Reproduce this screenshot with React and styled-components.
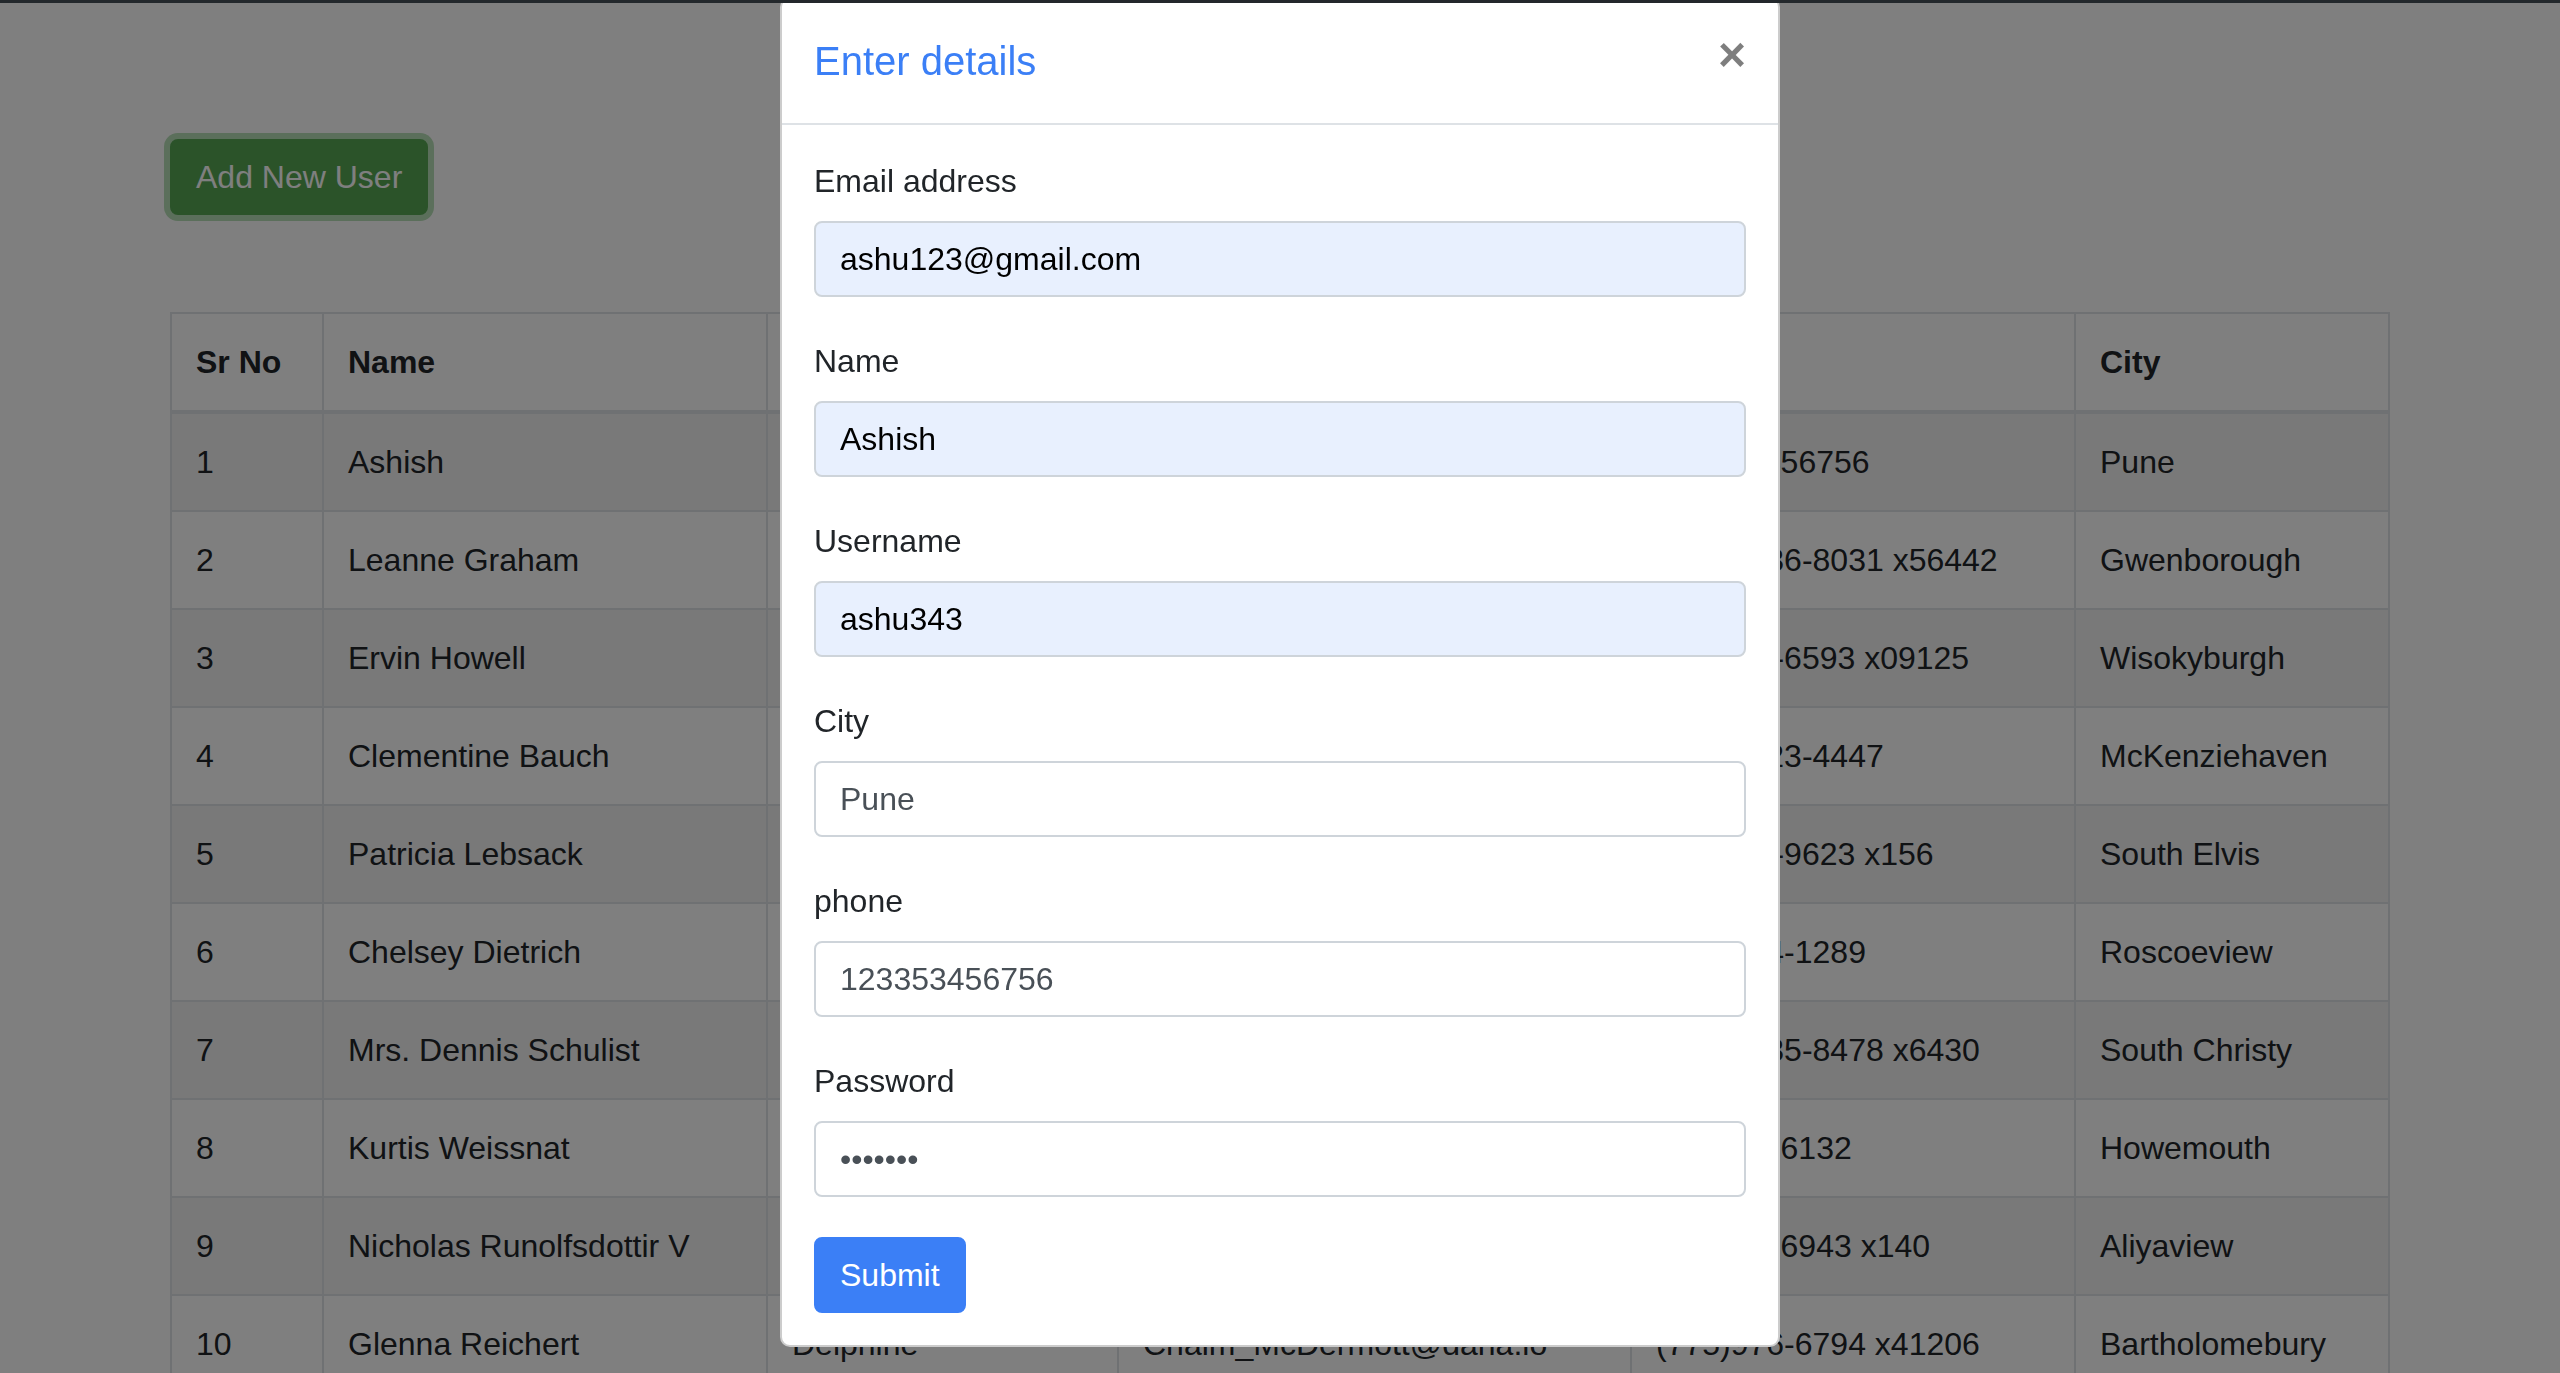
import React from "react";
import styled, { createGlobalStyle } from "styled-components";

const GlobalStyle = createGlobalStyle`
  html, body {
    margin: 0;
    padding: 0;
    overflow: hidden;
    background: #fff;
  }
  body {
    font-family: "Liberation Sans", Arial, Helvetica, sans-serif;
    font-size: 32px;
    line-height: 1.5;
    color: #212529;
  }
  *, *::before, *::after { box-sizing: border-box; }
`;

const TopStrip = styled.div`
  position: fixed;
  top: 0;
  left: 0;
  right: 0;
  height: 3px;
  background: #23282c;
  z-index: 100;
`;

const Container = styled.div`
  max-width: 2280px;
  margin: 0 auto;
  padding: 139px 30px 0;
`;

const AddButton = styled.button`
  font-family: inherit;
  font-size: 32px;
  line-height: 48px;
  padding: 12px 24px;
  border: 2px solid #56a653;
  border-radius: 8px;
  background: #56a653;
  color: #fff;
  box-shadow: 0 0 0 6px rgba(109, 189, 109, 0.5);
  cursor: pointer;
`;

const Table = styled.table`
  margin-top: 97px;
  width: 100%;
  table-layout: fixed;
  border-collapse: collapse;
  border: 2px solid #dee2e6;
  color: #212529;
`;

const Th = styled.th`
  text-align: left;
  font-weight: 700;
  padding: 24px;
  line-height: 48px;
  vertical-align: bottom;
  border: 2px solid #dee2e6;
  border-bottom-width: 4px;
`;

const Tr = styled.tr`
  background: ${(p) => (p.$odd ? "rgba(0,0,0,0.05)" : "transparent")};
`;

const Td = styled.td`
  padding: 24px;
  line-height: 48px;
  vertical-align: top;
  border: 2px solid #dee2e6;
  white-space: nowrap;
  overflow: hidden;
`;

const Backdrop = styled.div`
  position: fixed;
  inset: 0;
  background: rgba(0, 0, 0, 0.5);
  z-index: 10;
`;

const ModalLayer = styled.div`
  position: fixed;
  inset: 0;
  z-index: 20;
  display: flex;
  justify-content: center;
  align-items: flex-start;
`;

const Modal = styled.div`
  width: 1000px;
  margin-top: -3px;
  background: #fff;
  border: 2px solid rgba(0, 0, 0, 0.2);
  border-radius: 10px;
  display: flex;
  flex-direction: column;
`;

const ModalHeader = styled.div`
  display: flex;
  align-items: flex-start;
  justify-content: space-between;
  padding: 32px;
  border-bottom: 2px solid #dee2e6;
`;

const ModalTitle = styled.h5`
  margin: 0;
  font-size: 40px;
  font-weight: 400;
  line-height: 60px;
  color: #3b7ff6;
`;

const CloseButton = styled.button`
  padding: 32px;
  margin: -32px -32px -32px auto;
  background: transparent;
  border: 0;
  font-family: inherit;
  font-size: 48px;
  font-weight: 700;
  line-height: 1;
  color: #000;
  opacity: 0.5;
  text-shadow: 0 2px 0 #fff;
  cursor: pointer;
`;

const ModalBody = styled.form`
  padding: 32px;
`;

const FormGroup = styled.div`
  margin-bottom: 40px;
`;

const Label = styled.label`
  display: inline-block;
  margin-bottom: 16px;
  font-size: 32px;
  line-height: 48px;
  color: #212529;
`;

const Input = styled.input`
  display: block;
  width: 100%;
  height: 76px;
  padding: 12px 24px;
  font-family: inherit;
  font-size: 32px;
  line-height: 48px;
  color: ${(p) => (p.$filled ? "#000" : "#495057")};
  background: ${(p) => (p.$filled ? "#e8f0fe" : "#fff")};
  border: 2px solid #ced4da;
  border-radius: 8px;
  outline: none;
`;

const SubmitButton = styled.button`
  font-family: inherit;
  font-size: 32px;
  line-height: 48px;
  padding: 12px 24px;
  border: 2px solid #3b7ff6;
  border-radius: 8px;
  background: #3b7ff6;
  color: #fff;
  cursor: pointer;
`;

const widths = [152, 444, 351, 513, 444, 314];
const headers = ["Sr No", "Name", "Username", "Email", "Phone", "City"];
const users = [
  ["Ashish", "ashu343", "ashu123@gmail.com", "123353456756", "Pune"],
  ["Leanne Graham", "Bret", "Sincere@april.biz", "1-770-736-8031 x56442", "Gwenborough"],
  ["Ervin Howell", "Antonette", "Shanna@melissa.tv", "010-692-6593 x09125", "Wisokyburgh"],
  ["Clementine Bauch", "Samantha", "Nathan@yesenia.net", "1-463-123-4447", "McKenziehaven"],
  ["Patricia Lebsack", "Karianne", "Julianne.OConner@kory.org", "493-170-9623 x156", "South Elvis"],
  ["Chelsey Dietrich", "Kamren", "Lucio_Hettinger@annie.ca", "(254)954-1289", "Roscoeview"],
  ["Mrs. Dennis Schulist", "Leopoldo_Corkery", "Karley_Dach@jasper.info", "1-477-935-8478 x6430", "South Christy"],
  ["Kurtis Weissnat", "Elwyn.Skiles", "Telly.Hoeger@billy.biz", "210.067.6132", "Howemouth"],
  ["Nicholas Runolfsdottir V", "Maxime_Nienow", "Sherwood@rosamond.me", "586.493.6943 x140", "Aliyaview"],
  ["Glenna Reichert", "Delphine", "Chaim_McDermott@dana.io", "(775)976-6794 x41206", "Bartholomebury"],
];

const fields = [
  { label: "Email address", type: "email", value: "ashu123@gmail.com", filled: true },
  { label: "Name", type: "text", value: "Ashish", filled: true },
  { label: "Username", type: "text", value: "ashu343", filled: true },
  { label: "City", type: "text", value: "Pune", filled: false },
  { label: "phone", type: "text", value: "123353456756", filled: false },
  { label: "Password", type: "password", value: "ashu343", filled: false },
];

export default function App() {
  return (
    <>
      <GlobalStyle />
      <Container>
        <AddButton type="button">Add New User</AddButton>
        <Table>
          <colgroup>
            {widths.map((w, i) => (
              <col key={i} style={{ width: w }} />
            ))}
          </colgroup>
          <thead>
            <tr>
              {headers.map((h) => (
                <Th key={h}>{h}</Th>
              ))}
            </tr>
          </thead>
          <tbody>
            {users.map((u, i) => (
              <Tr key={i} $odd={i % 2 === 0}>
                <Td>{i + 1}</Td>
                {u.map((c, j) => (
                  <Td key={j}>{c}</Td>
                ))}
              </Tr>
            ))}
          </tbody>
        </Table>
      </Container>
      <Backdrop />
      <ModalLayer>
        <Modal>
          <ModalHeader>
            <ModalTitle>Enter details</ModalTitle>
            <CloseButton type="button" aria-label="Close">×</CloseButton>
          </ModalHeader>
          <ModalBody onSubmit={(e) => e.preventDefault()}>
            {fields.map((f) => (
              <FormGroup key={f.label}>
                <Label>{f.label}</Label>
                <Input type={f.type} defaultValue={f.value} $filled={f.filled} readOnly />
              </FormGroup>
            ))}
            <SubmitButton type="submit">Submit</SubmitButton>
          </ModalBody>
        </Modal>
      </ModalLayer>
      <TopStrip />
    </>
  );
}
